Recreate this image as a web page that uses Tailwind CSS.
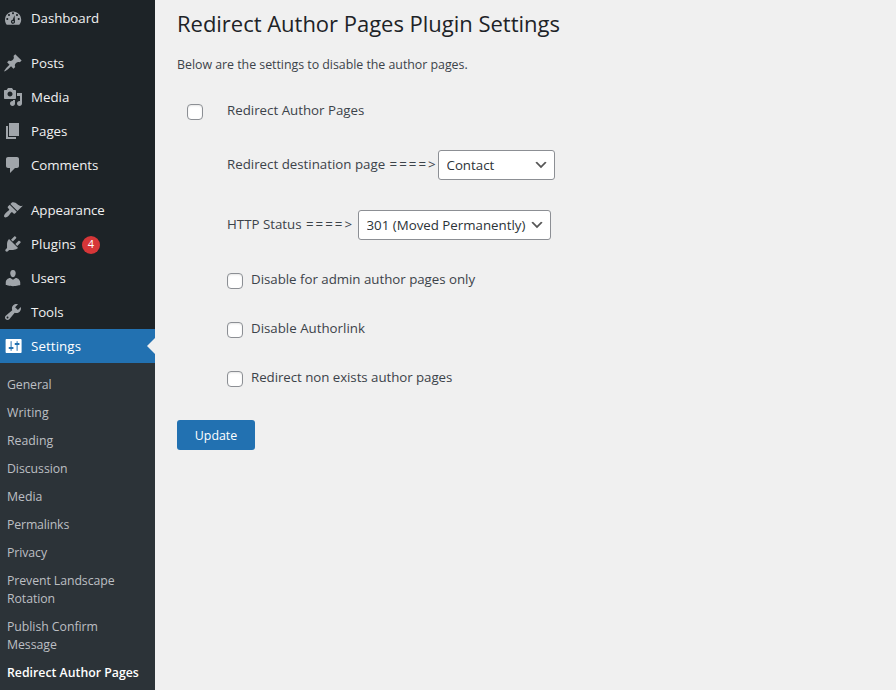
<!DOCTYPE html>
<html lang="en">
<head>
<meta charset="utf-8">
<title>Redirect Author Pages Plugin Settings</title>
<script src="https://cdn.jsdelivr.net/npm/@tailwindcss/browser@4"></script>
</head>
<body class="flex h-[690px] w-[896px] overflow-hidden bg-[#f0f0f0] font-['Segoe_UI','Open_Sans',sans-serif] text-[13px] text-[#3c434a]">
<nav class="flex w-[155px] shrink-0 flex-col bg-[#1d2327] pt-px text-[13.3px] text-[#f0f0f1]">
  <a class="mb-[11px] flex h-[34px] shrink-0 items-center gap-2 pl-[3px]"><svg class="size-5 fill-[#a0a5aa]" viewBox="0 0 20 20"><path fill-rule="evenodd" d="M3.760 16.800h12.480c1.110-1.380 1.960-3.160 1.960-5.050C18.200 7 14.520 3.400 10.100 3.400S2 7 2 11.750c0 1.890.65 3.670 1.760 5.050zM10 4.200c.55 0 1 .45 1 1s-.45 1-1 1-1-.45-1-1 .45-1 1-1zM6 6c.55 0 1 .45 1 1s-.45 1-1 1-1-.45-1-1 .45-1 1-1zM14 6c.55 0 1 .45 1 1s-.45 1-1 1-1-.45-1-1 .45-1 1-1zM4.300 10c.55 0 1 .45 1 1s-.45 1-1 1-1-.45-1-1 .45-1 1-1zM15.700 10c.55 0 1 .45 1 1s-.45 1-1 1-1-.45-1-1 .45-1 1-1zM11.500 7.200L12 13.300a2.100 2.100 0 1 1-2.300-1.600zM10 12.900a.8.8 0 1 0 .01 0z"/></svg><span class="mt-0.5 tracking-[-0.060px]">Dashboard</span></a>
  <a class="flex h-[34px] shrink-0 items-center gap-2 pl-[3px]"><svg class="size-5 fill-[#a0a5aa]" viewBox="0 0 20 20"><path d="M10.440 3.020l1.820-1.820 6.360 6.350-1.830 1.820c-1.050-.68-2.480-.57-3.410.36l-.75.75c-.92.93-1.040 2.350-.35 3.410l-1.830 1.820-2.410-2.410-2.800 2.790c-.42.42-3.380 2.710-3.800 2.290s1.860-3.390 2.280-3.810l2.790-2.790L4.100 9.360l1.830-1.820c1.050.69 2.480.57 3.400-.36l.75-.75c.93-.92 1.050-2.350.36-3.410z"/></svg><span class="mt-0.5 tracking-[-0.060px]">Posts</span></a>
  <a class="flex h-[34px] shrink-0 items-center gap-2 pl-[3px]"><svg class="size-5 fill-[#a0a5aa]" viewBox="0 0 20 20"><path fill-rule="evenodd" d="M13 11V4c0-.55-.45-1-1-1h-1.670L9 1H5L3.670 3H2c-.55 0-1 .45-1 1v7c0 .55.45 1 1 1h10c.55 0 1-.45 1-1zM7 4.500c1.380 0 2.500 1.120 2.500 2.500S8.380 9.500 7 9.500 4.500 8.380 4.500 7 5.620 4.500 7 4.500zM14 6h5v10.500c0 1.380-1.120 2.500-2.500 2.500S14 17.880 14 16.500s1.120-2.500 2.500-2.500c.17 0 .34.02.5.05V9h-3V6zm-4 8.050V13h2v3.500c0 1.380-1.120 2.500-2.500 2.500S7 17.880 7 16.500 8.120 14 9.500 14c.17 0 .34.02.5.05z"/></svg><span class="mt-0.5">Media</span></a>
  <a class="flex h-[34px] shrink-0 items-center gap-2 pl-[3px]"><svg class="size-5 fill-[#a0a5aa]" viewBox="0 0 20 20"><path d="M6 15V2h10v13H6zm-1 1h8v2H3V5h2v11z"/></svg><span class="mt-0.5">Pages</span></a>
  <a class="mb-[11px] flex h-[34px] shrink-0 items-center gap-2 pl-[3px]"><svg class="size-5 fill-[#a0a5aa]" viewBox="0 0 20 20"><path d="M5 2h9c1.100 0 2 .9 2 2v7c0 1.100-.9 2-2 2h-2l-5 5v-5H5c-1.100 0-2-.9-2-2V4c0-1.100.9-2 2-2z"/></svg><span class="mt-0.5 tracking-[-0.060px]">Comments</span></a>
  <a class="flex h-[34px] shrink-0 items-center gap-2 pl-[3px]"><svg class="size-5 fill-[#a0a5aa]" viewBox="0 0 20 20"><path d="M14.480 11.060L7.410 3.990l1.500-1.500c.5-.56 2.300-.47 3.510.32 1.210.8 1.430 1.280 2.910 2.100 1.180.64 2.450 1.260 4.450.85zm-.71.71L6.700 4.700 4.930 6.470c-.39.39-.39 1.020 0 1.410l1.060 1.060c.39.39.39 1.030 0 1.420-.6.6-1.430 1.110-2.210 1.690-.35.26-.7.53-1.010.84C1.430 14.230.4 16.080 1.400 17.070c.99 1 2.840-.03 4.180-1.360.31-.31.58-.66.85-1.020.57-.78 1.080-1.610 1.690-2.210.39-.39 1.020-.39 1.410 0l1.060 1.060c.39.39 1.020.39 1.410 0z"/></svg><span class="mt-0.5 tracking-[-0.060px]">Appearance</span></a>
  <a class="flex h-[34px] shrink-0 items-center gap-2 pl-[3px]"><svg class="size-5 fill-[#a0a5aa]" viewBox="0 0 20 20"><path d="M13.110 4.360L9.870 7.600 8 5.730l3.240-3.240c.35-.34 1.050-.2 1.560.32.52.51.66 1.210.31 1.550zm-8 1.770l.91-1.120 9.010 9.010-1.190.84c-.71.71-2.630 1.160-3.820 1.160H6.140L4.900 17.260c-.59.59-1.540.59-2.120 0-.59-.58-.59-1.530 0-2.120l1.240-1.240v-3.880c0-1.130.4-3.190 1.090-3.890zm7.260 3.970l3.240-3.240c.34-.35 1.040-.21 1.550.31.52.51.66 1.210.31 1.550l-3.240 3.250z"/></svg><span class="mt-0.5 tracking-[0.060px]">Plugins</span><span class="mt-px -ml-0.5 flex size-[18px] items-center justify-center rounded-full bg-[#d63638] text-[11px] text-white">4</span></a>
  <a class="flex h-[34px] shrink-0 items-center gap-2 pl-[3px]"><svg class="size-5 fill-[#a0a5aa]" viewBox="0 0 20 20"><path d="M10 9.250c-2.270 0-2.730-3.440-2.730-3.440C7 4.020 7.820 2 9.970 2c2.160 0 2.980 2.020 2.710 3.810 0 0-.41 3.440-2.680 3.440zm0 2.570L12.720 10c2.390 0 4.520 2.330 4.520 4.530v2.490s-3.650 1.130-7.240 1.130c-3.650 0-7.240-1.130-7.240-1.130v-2.490c0-2.250 1.940-4.480 4.470-4.480z"/></svg><span class="mt-0.5 tracking-[-0.100px]">Users</span></a>
  <a class="flex h-[34px] shrink-0 items-center gap-2 pl-[3px]"><svg class="size-5 fill-[#a0a5aa]" viewBox="0 0 20 20"><path fill-rule="evenodd" d="M16.680 9.770c-1.340 1.340-3.300 1.670-4.950.99l-5.410 6.520c-.99.99-2.590.99-3.580 0s-.99-2.590 0-3.570l6.520-5.420c-.68-1.650-.35-3.610.99-4.950 1.280-1.280 3.120-1.620 4.720-1.060l-2.890 2.890 2.820 2.820 2.860-2.870c.53 1.580.18 3.390-1.080 4.650zM3.810 16.210c.4.39 1.040.39 1.430 0 .4-.4.4-1.040 0-1.430-.39-.4-1.030-.4-1.430 0-.39.39-.39 1.030 0 1.430z"/></svg><span class="mt-0.5 tracking-[-0.100px]">Tools</span></a>
  <a class="relative flex h-[34px] shrink-0 items-center gap-2 bg-[#2271b1] pl-[3px] text-white"><svg class="size-5 fill-white" viewBox="-0.600 0 20 20"><path fill-rule="evenodd" d="M18 16V4c0-.55-.45-1-1-1H3c-.55 0-1 .45-1 1v12c0 .55.45 1 1 1h14c.55 0 1-.45 1-1zM8 11h1c.55 0 1 .45 1 1s-.45 1-1 1H8v1.500c0 .28-.22.5-.5.5s-.5-.22-.5-.5V13H6c-.55 0-1-.45-1-1s.45-1 1-1h1V5.500c0-.28.22-.5.5-.5s.5.22.5.5V11zm5-2h-1c-.55 0-1-.45-1-1s.45-1 1-1h1V5.500c0-.28.22-.5.5-.5s.5.22.5.5V7h1c.55 0 1 .45 1 1s-.45 1-1 1h-1v5.500c0 .28-.22.5-.5.5s-.5-.22-.5-.5V9z"/></svg><span class="mt-0.5 tracking-[0.1px]">Settings</span><i class="absolute top-[9px] right-0 border-y-8 border-r-8 border-y-transparent border-r-[#f0f0f0]"></i></a>
  <div class="flex grow flex-col bg-[#2c3338] pt-2 text-[12.300px] leading-[18px] text-[#bcbfc3]">
    <a class="px-[7px] py-[5px] tracking-[-0.100px]">General</a>
    <a class="px-[7px] py-[5px] tracking-[0.080px]">Writing</a>
    <a class="px-[7px] py-[5px]">Reading</a>
    <a class="px-[7px] py-[5px] tracking-[-0.050px]">Discussion</a>
    <a class="px-[7px] py-[5px]">Media</a>
    <a class="px-[7px] py-[5px] tracking-[-0.150px]">Permalinks</a>
    <a class="px-[7px] py-[5px] tracking-[-0.080px]">Privacy</a>
    <a class="px-[7px] py-[5px] tracking-[-0.080px]">Prevent Landscape<br>Rotation</a>
    <a class="px-[7px] py-[5px] tracking-[-0.050px]">Publish Confirm<br>Message</a>
    <a class="px-[7px] py-[5px] font-semibold whitespace-nowrap text-white">Redirect Author Pages</a>
  </div>
</nav>
<main class="flex flex-col items-start pl-[22px] whitespace-nowrap">
  <h1 class="mt-2 text-[22px] leading-[30px] text-[#1d2327]"><span class="tracking-[-0.020px]">Redirect Author Pages Plugin Settings</span></h1>
  <p class="mt-[17px] text-[12.400px] leading-5 tracking-[-0.030px]">Below are the settings to disable the author pages.</p>
  <form class="flex flex-col items-start pt-[25px] text-[13.300px] leading-5">
    <label class="flex h-5 pl-2.5"><input type="checkbox" class="mt-1 size-4 appearance-none rounded border border-[#8c8f94] bg-white shadow-[inset_0_1px_2px_rgba(0,0,0,0.1)]"><span class="ml-6">Redirect Author Pages</span></label>
    <div class="mt-[30px] flex h-[30px] pl-[50px]"><label class="w-[211px] pt-[4px]"><span>Redirect destination page <span class="ml-px tracking-[2px]">====&gt;</span></span></label>
      <div class="relative"><select class="h-[30px] w-[117px] appearance-none rounded-[3px] border border-[#8c8f94] bg-white pl-[7.500px] text-[#2c3338]"><option>Contact</option></select><svg class="pointer-events-none absolute top-[7px] right-1.5 size-4" viewBox="0 0 20 20"><path fill="#555" d="M5 6l5 5 5-5 2 1-7 7-7-7 2-1z"/></svg></div></div>
    <div class="mt-[30px] flex h-[30px] pl-[50px]"><label class="w-[131px] pt-[4px]"><span>HTTP Status <span class="ml-px tracking-[2px]">====&gt;</span></span></label>
      <div class="relative"><select class="h-[30px] w-[193px] appearance-none rounded-[3px] border border-[#8c8f94] bg-white pl-[7.500px] text-[#2c3338]"><option>301 (Moved Permanently)</option></select><svg class="pointer-events-none absolute top-[7px] right-1.5 size-4" viewBox="0 0 20 20"><path fill="#555" d="M5 6l5 5 5-5 2 1-7 7-7-7 2-1z"/></svg></div></div>
    <label class="mt-[29px] flex h-5 pl-[50px]"><input type="checkbox" class="mt-1 size-4 appearance-none rounded border border-[#8c8f94] bg-white shadow-[inset_0_1px_2px_rgba(0,0,0,0.1)]"><span class="ml-2 tracking-[-0.020px]">Disable for admin author pages only</span></label>
    <label class="mt-[29px] flex h-5 pl-[50px]"><input type="checkbox" class="mt-1 size-4 appearance-none rounded border border-[#8c8f94] bg-white shadow-[inset_0_1px_2px_rgba(0,0,0,0.1)]"><span class="ml-2">Disable Authorlink</span></label>
    <label class="mt-[29px] flex h-5 pl-[50px]"><input type="checkbox" class="mt-1 size-4 appearance-none rounded border border-[#8c8f94] bg-white shadow-[inset_0_1px_2px_rgba(0,0,0,0.1)]"><span class="ml-2 tracking-[-0.050px]">Redirect non exists author pages</span></label>
    <button type="button" class="mt-[33px] h-[30px] w-[78px] rounded-[3px] bg-[#2271b1] pt-0.5 text-[12.400px] text-white"><span>Update</span></button>
  </form>
</main>
</body>
</html>
